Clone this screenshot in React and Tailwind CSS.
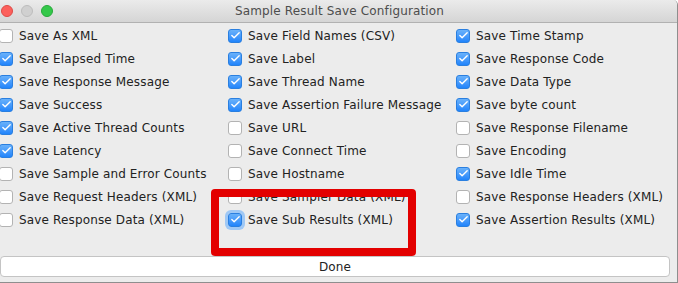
import { Check } from "lucide-react"

const rows = [
  [["Save As XML", false], ["Save Field Names (CSV)", true], ["Save Time Stamp", true]],
  [["Save Elapsed Time", true], ["Save Label", true], ["Save Response Code", true]],
  [["Save Response Message", true], ["Save Thread Name", true], ["Save Data Type", true]],
  [["Save Success", true], ["Save Assertion Failure Message", true], ["Save byte count", true]],
  [["Save Active Thread Counts", true], ["Save URL", false], ["Save Response Filename", false]],
  [["Save Latency", true], ["Save Connect Time", false], ["Save Encoding", false]],
  [["Save Sample and Error Counts", false], ["Save Hostname", false], ["Save Idle Time", true]],
  [["Save Request Headers (XML)", false], ["Save Sampler Data (XML)", false], ["Save Response Headers (XML)", false]],
  [["Save Response Data (XML)", false], ["Save Sub Results (XML)", true, true], ["Save Assertion Results (XML)", true]],
]

function Box({ checked, focused }) {
  if (checked) {
    return (
      <div className={`w-[14px] h-[14px] rounded-[3px] bg-gradient-to-b from-[#69b1fa] to-[#1f84fb] border border-[#2a7fe0] flex items-center justify-center shrink-0 ${focused ? 'ring-[3px] ring-[#9fc8f5]' : ''}`}>
        <Check className="w-[11px] h-[11px] text-white" strokeWidth={3} />
      </div>
    )
  }
  return <div className="w-[14px] h-[14px] rounded-[3px] bg-white border border-[#b3b3b3] shrink-0" />
}

export default function App() {
  return (
    <div className="relative w-[678px] h-[283px] overflow-hidden bg-[#ececec] border-r border-b border-[#8e8e8e] rounded-tr-[5px] font-['DejaVu_Sans',sans-serif] text-[12px] tracking-[0.15px] text-[#222]">
      {/* title bar */}
      <div className="relative h-[23px] flex items-center justify-center bg-gradient-to-b from-[#ebebeb] to-[#d5d5d5] border-b border-[#b1b1b1]">
        <div className="absolute left-[1px] top-[5px] flex gap-[8px]">
          <span className="w-[12px] h-[12px] rounded-full bg-[#fc605c] border border-[#de4a46]" />
          <span className="w-[12px] h-[12px] rounded-full bg-[#d0d0d0] border border-[#bdbdbd]" />
          <span className="w-[12px] h-[12px] rounded-full bg-[#34c84a] border border-[#27a93a]" />
        </div>
        <span className="text-[#4d4d4d] pl-[2px]">Sample Result Save Configuration</span>
      </div>

      {/* options */}
      <div className="pt-[1px] flex flex-col">
        {rows.map((row, i) => (
          <div key={i} className="grid grid-cols-[228px_228px_1fr] h-[23px] items-center">
            {row.map(([label, checked, focused], j) => (
              <div key={j} className={`flex items-center gap-[6px] whitespace-nowrap ${j === 0 ? '-ml-[1px]' : ''}`}>
                <Box checked={checked} focused={focused} />
                <span>{label}</span>
              </div>
            ))}
          </div>
        ))}
      </div>

      {/* done button */}
      <div className="absolute left-0 top-[256px] w-[670px] h-[21px] bg-white border border-[#c4c4c4] rounded-[4px] flex items-center justify-center">
        Done
      </div>

      {/* annotation */}
      <div className="absolute left-[211px] top-[189px] w-[205px] h-[67px] border-[8px] border-[#e30000] rounded-[4px]" />
    </div>
  )
}
